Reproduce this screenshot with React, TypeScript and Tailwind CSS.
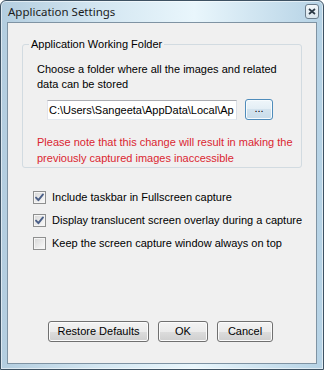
import React from 'react';

const CheckMark = () => (
  <svg width="11" height="11" viewBox="0 0 11 11" fill="none">
    <path d="M2 5.6 L4.4 8.2 L9 2.4" stroke="#4b5f87" strokeWidth="1.9" strokeLinecap="round" strokeLinejoin="round" />
  </svg>
);

function CheckRow({ label, checked }: { label: string; checked?: boolean }) {
  return (
    <label className="flex h-[23px] items-center whitespace-nowrap">
      <span className="flex h-[13px] w-[13px] items-center justify-center border border-[#8e8f8f] bg-[linear-gradient(135deg,#d6d6d6,#fbfbfb)] shadow-[inset_0_0_0_1px_#f5f5f5]">
        {checked && <CheckMark />}
      </span>
      <span className="ml-[6px]">{label}</span>
    </label>
  );
}

function PushButton({ label, className }: { label: string; className: string }) {
  return (
    <button
      type="button"
      className={`flex h-[21px] items-center justify-center rounded-[3px] border border-[#707070] bg-[linear-gradient(#f3f3f3,#ebebeb_50%,#dddddd_50%,#cfcfcf)] shadow-[inset_0_0_0_1px_#fbfbfb] ${className}`}
    >
      {label}
    </button>
  );
}

export default function App() {
  return (
    <div className="h-[373px] w-[328px] bg-white font-['Liberation_Sans',Arial,sans-serif] text-[11px] leading-[15px] text-black">
      <div className="flex h-[370px] w-[324px] flex-col rounded-t-[6px] border border-[#3e5263] bg-[linear-gradient(90deg,#b3cddf,#d3e6f1_30%,#e9f6fc_60%,#b5d2e5)] px-[6px] pb-[5px] shadow-[inset_0_0_0_1px_rgba(255,255,255,0.55)]">
        {/* title bar */}
        <div className="flex h-[21px] items-center justify-between pl-[1px]">
          <span className="font-['Noto_Sans',sans-serif] text-[11.5px] text-[#1b1b1b]">Application Settings</span>
          <button
            type="button"
            className="-mr-[2px] flex h-[15px] w-[14px] items-center justify-center rounded-[3px] border border-[#6b7d8c] bg-[linear-gradient(#f2f7fa,#d9e6ee)]"
          >
            <svg width="8" height="7" viewBox="0 0 8 7">
              <path d="M1 1 L7 6 M7 1 L1 6" stroke="#2c3a46" strokeWidth="1.7" />
            </svg>
          </button>
        </div>

        {/* client area */}
        <div className="flex flex-1 flex-col whitespace-nowrap border border-[#7f93a3] bg-[#f0f0f0]">
          <fieldset className="ml-[14px] mt-[14px] w-[277px] rounded-[3px] border border-[#d2dbe1] pb-[1px] pl-[14px] pr-[8px]">
            <legend className="-ml-[8px] px-[2px]">Application Working Folder</legend>
            <p className="mt-[10px]">
              Choose a folder where all the images and related
              <br />
              data can be stored
            </p>
            <div className="mt-[7px] flex items-center pl-[10px]">
              <div className="h-[20px] w-[190px] overflow-hidden border border-[#abadb3] border-b-[#e3e9ef] border-l-[#e2e3ea] border-r-[#dbdfe6] bg-white pl-[1px] leading-[18px]">
                C:\Users\Sangeeta\AppData\Local\Ap
              </div>
              <button
                type="button"
                className="ml-[8px] flex h-[21px] w-[28px] items-center justify-center rounded-[3px] border border-[#4f8cbb] bg-[linear-gradient(#eff6fa,#e3eef5_50%,#d3e3ee_50%,#c9dce9)] pb-[3px] shadow-[inset_0_0_0_1px_#f7fbfd]"
              >
                ...
              </button>
            </div>
            <p className="mt-[14px] leading-[16px] text-[#db2630]">
              Please note that this change will result in making the
              <br />
              previously captured images inaccessible
            </p>
          </fieldset>

          <div className="ml-[25px] mt-[18px] flex flex-col">
            <CheckRow label="Include taskbar in Fullscreen capture" checked />
            <CheckRow label="Display translucent screen overlay during a capture" checked />
            <CheckRow label="Keep the screen capture window always on top" />
          </div>

          <div className="mb-[21px] mt-auto flex pl-[40px]">
            <PushButton label="Restore Defaults" className="w-[101px]" />
            <PushButton label="OK" className="ml-[9px] w-[50px]" />
            <PushButton label="Cancel" className="ml-[9px] w-[56px]" />
          </div>
        </div>
      </div>
    </div>
  );
}
